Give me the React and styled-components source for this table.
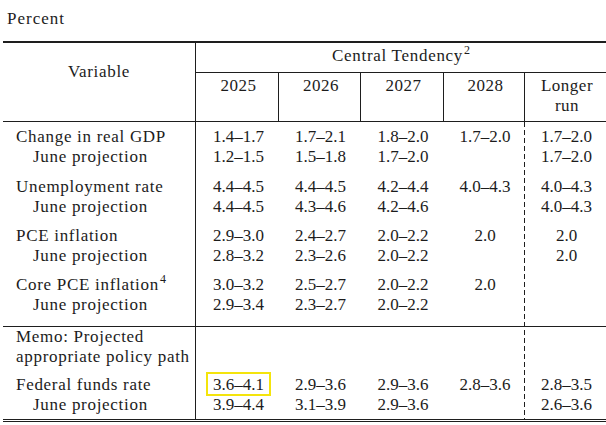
import React from "react";
import styled, { createGlobalStyle } from "styled-components";

const GlobalStyle = createGlobalStyle`
  html, body {
    margin: 0;
    padding: 0;
    background: #ffffff;
  }
  body {
    font-family: "Liberation Serif", "Times New Roman", serif;
    color: #1c1c1c;
  }
`;

const rows = [
  { label: "Change in real GDP", vals: ["1.4–1.7", "1.7–2.1", "1.8–2.0", "1.7–2.0", "1.7–2.0"], top: 5 },
  { label: "June projection", indent: true, vals: ["1.2–1.5", "1.5–1.8", "1.7–2.0", "", "1.7–2.0"] },
  { label: "Unemployment rate", vals: ["4.4–4.5", "4.4–4.5", "4.2–4.4", "4.0–4.3", "4.0–4.3"], top: 10 },
  { label: "June projection", indent: true, vals: ["4.4–4.5", "4.3–4.6", "4.2–4.6", "", "4.0–4.3"] },
  { label: "PCE inflation", vals: ["2.9–3.0", "2.4–2.7", "2.0–2.2", "2.0", "2.0"], top: 9 },
  { label: "June projection", indent: true, vals: ["2.8–3.2", "2.3–2.6", "2.0–2.2", "", "2.0"] },
  { label: "Core PCE inflation", note: "4", vals: ["3.0–3.2", "2.5–2.7", "2.0–2.2", "2.0", ""], top: 9 },
  { label: "June projection", indent: true, vals: ["2.9–3.4", "2.3–2.7", "2.0–2.2", "", ""], bottom: 11, rule: true },
  { label: "Memo: Projected", vals: ["", "", "", "", ""] },
  { label: "appropriate policy path", vals: ["", "", "", "", ""] },
  { label: "Federal funds rate", vals: ["3.6–4.1", "2.9–3.6", "2.9–3.6", "2.8–3.6", "2.8–3.5"], top: 8, mark: 0 },
  { label: "June projection", indent: true, vals: ["3.9–4.4", "3.1–3.9", "2.9–3.6", "", "2.6–3.6"], bottom: 4 },
];

const years = ["2025", "2026", "2027", "2028"];

export default function App() {
  return (
    <Page>
      <GlobalStyle />
      <Caption>Percent</Caption>
      <Frame>
        <Table>
          <colgroup>
            <Col $w={193} />
            <Col $w={82} />
            <Col $w={82} />
            <Col $w={83} />
            <Col $w={81} />
            <Col $w={82} />
          </colgroup>
          <thead>
            <tr>
              <VarHead rowSpan={2}>Variable</VarHead>
              <TendencyHead colSpan={5}>
                Central Tendency<Sup>2</Sup>
              </TendencyHead>
            </tr>
            <tr>
              {years.map((y, i) => (
                <YearHead key={y} $first={i === 0}>
                  {y}
                </YearHead>
              ))}
              <YearHead>
                Longer
                <br />
                run
              </YearHead>
            </tr>
          </thead>
          <Body>
            {rows.map((r, i) => (
              <Row key={i} $top={r.top || 0} $bottom={r.bottom || 0} $rule={r.rule}>
                <Label $indent={r.indent}>
                  {r.label}
                  {r.note && <Sup>{r.note}</Sup>}
                </Label>
                {r.vals.map((v, j) => (
                  <Value key={j}>
                    {r.mark === j ? <Highlight>{v}</Highlight> : v}
                  </Value>
                ))}
              </Row>
            ))}
          </Body>
        </Table>
      </Frame>
    </Page>
  );
}

const Page = styled.div`
  width: 606px;
  height: 425px;
  overflow: hidden;
  padding-left: 3px;
  box-sizing: border-box;
`;

const Caption = styled.div`
  height: 41px;
  box-sizing: border-box;
  padding: 9px 0 0 4px;
  font-size: 17px;
  line-height: 20px;
  letter-spacing: 1px;
`;

const Frame = styled.div`
  width: 603px;
  border-top: 2px solid #1e1e1e;
  border-bottom: 3px double #1e1e1e;
`;

const Table = styled.table`
  width: 603px;
  table-layout: fixed;
  border-collapse: separate;
  border-spacing: 0;
  font-family: "Liberation Serif", "Times New Roman", serif;
  font-size: 17px;
  line-height: 20px;
  color: #1c1c1c;
`;

const Col = styled.col`
  width: ${(p) => p.$w}px;
`;

const HeadCell = styled.th`
  font-weight: normal;
  text-align: center;
  vertical-align: top;
  padding: 0;
  letter-spacing: 0.7px;
`;

const VarHead = styled(HeadCell)`
  padding-top: 19px;
  border-right: 1px solid #1e1e1e;
  border-bottom: 1px solid #1e1e1e;
`;

const TendencyHead = styled(HeadCell)`
  padding: 3px 0 6px;
  border-bottom: 1px solid #1e1e1e;
`;

const YearHead = styled(HeadCell)`
  padding: 3px 0 5px 3px;
  letter-spacing: 0.5px;
  border-bottom: 1px solid #1e1e1e;
  border-left: ${(p) => (p.$first ? "none" : "1px solid #1e1e1e")};
`;

const Body = styled.tbody`
  background-image: linear-gradient(#1e1e1e 0 5px, transparent 5px 8px);
  background-size: 1px 8px;
  background-repeat: repeat-y;
  background-position: 521px 0;
`;

const Row = styled.tr`
  & > td {
    padding-top: ${(p) => p.$top}px;
    padding-bottom: ${(p) => p.$bottom}px;
    border-bottom: ${(p) => (p.$rule ? "1px solid #1e1e1e" : "none")};
  }
`;

const Label = styled.td`
  && {
    padding-left: ${(p) => (p.$indent ? 30 : 13)}px;
  }
  padding-right: 0;
  white-space: nowrap;
  letter-spacing: 0.7px;
  border-right: 1px solid #1e1e1e;
  vertical-align: top;
`;

const Value = styled.td`
  && {
    padding-left: 3px;
  }
  padding-right: 0;
  text-align: center;
  white-space: nowrap;
  vertical-align: top;
`;

const Sup = styled.sup`
  font-size: 12px;
  line-height: 0;
  vertical-align: 7px;
  margin-left: 1px;
  letter-spacing: 0;
`;

const Highlight = styled.span`
  padding: 1px 5px 0;
  outline: 2px solid #f4e40c;
`;
